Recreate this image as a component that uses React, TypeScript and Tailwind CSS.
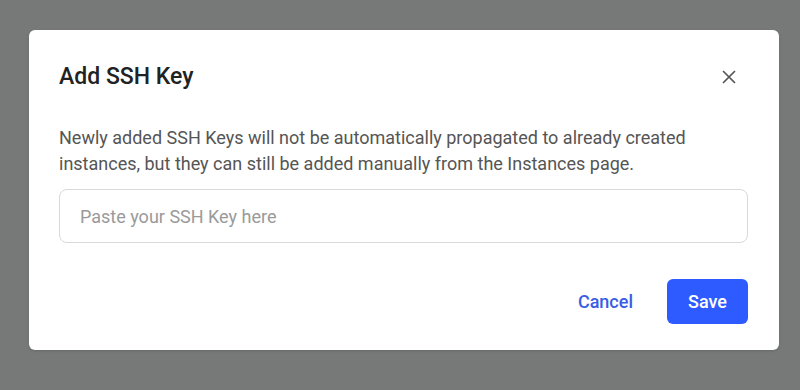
import React, { useState } from "react";

const App = () => {
  const [sshKey, setSshKey] = useState<string>("");

  return (
    <div
      className="w-[800px] h-[390px] bg-[#777878] pt-[30px] pl-[29px]"
      style={{ fontFamily: "Roboto, 'Noto Sans', sans-serif" }}
    >
      <div className="w-[750px] h-[320px] bg-white rounded-md shadow-sm px-[30px] pt-[27px]">
        <div className="flex items-center justify-between">
          <p className="text-[23px] font-medium text-[#222] leading-[40px]">
            Add SSH Key
          </p>
          <button className="w-8 h-8 mr-[4px] flex items-center justify-center text-[#555]">
            <svg width="14" height="14" viewBox="0 0 14 14" fill="none">
              <path
                d="M1.5 1.5 L12.5 12.5 M12.5 1.5 L1.5 12.5"
                stroke="currentColor"
                strokeWidth="1.7"
                strokeLinecap="round"
              />
            </svg>
          </button>
        </div>
        <p className="mt-[28px] text-[18px] leading-[26px] text-[#555]">
          Newly added SSH Keys will not be automatically propagated to already
          created
          <br />
          instances, but they can still be added manually from the Instances
          page.
        </p>
        <input
          type="text"
          className="mt-[12px] w-[689px] h-[54px] border border-[#d9d9d9] rounded-lg px-[20px] text-[18px] text-[#333] placeholder:text-[#9a9a9a] outline-none"
          placeholder="Paste your SSH Key here"
          value={sshKey}
          onChange={(e: React.ChangeEvent<HTMLInputElement>) =>
            setSshKey(e.target.value)
          }
        />
        <div className="mt-[36px] flex items-center justify-end gap-[34px] pr-[1px]">
          <button className="text-[18px] font-medium text-[#3a5de6]">
            Cancel
          </button>
          <button className="w-[81px] h-[45px] rounded-md bg-[#2e5bff] text-white text-[18px] font-medium">
            Save
          </button>
        </div>
      </div>
    </div>
  );
};

export default App;
